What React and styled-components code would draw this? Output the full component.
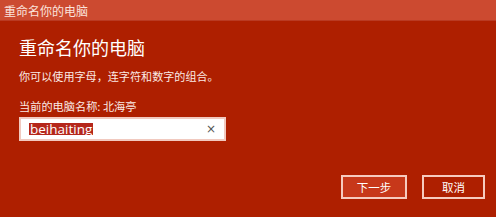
import React from "react"
import styled, { createGlobalStyle } from "styled-components"

const GlobalStyle = createGlobalStyle`
  html, body {
    margin: 0;
    padding: 0;
  }
  body {
    font-family: "Noto Sans CJK SC", "Noto Sans", sans-serif;
  }
`

const Window = styled.div`
  width: 496px;
  height: 217px;
  background: #ae1f00;
  display: flex;
  flex-direction: column;
  overflow: hidden;
`

const TitleBar = styled.div`
  height: 21px;
  background: #cc4a30;
  border-bottom: 1px solid #b93a22;
  box-sizing: border-box;
  display: flex;
  align-items: center;
  padding-left: 4px;
  color: #fbe3dc;
  font-size: 12px;
`

const Content = styled.div`
  padding: 14px 11px 0 19px;
  display: flex;
  flex-direction: column;
`

const Heading = styled.h1`
  margin: 0;
  font-size: 18px;
  line-height: 24px;
  font-weight: 400;
  color: #ffffff;
`

const Hint = styled.p`
  margin: 9px 0 0;
  font-size: 11.1px;
  line-height: 16px;
  color: #fbeae5;
`

const Label = styled.div`
  margin-top: 15px;
  font-size: 11.2px;
  line-height: 14px;
  color: #fbeae5;
`

const InputBox = styled.div`
  margin-top: 4px;
  width: 207px;
  height: 24px;
  box-sizing: border-box;
  border: 2px solid #f1c9bf;
  background: #ffffff;
  display: flex;
  align-items: center;
  padding: 0 8px 0 8px;
`

const Selected = styled.span`
  background: #b5271b;
  color: #ffffff;
  font-family: "Open Sans", "Noto Sans", sans-serif;
  font-size: 13.5px;
  line-height: 12px;
  padding: 0 1px;
  flex: none;
`

const Clear = styled.span`
  margin-left: auto;
  color: #555;
  font-size: 12px;
  line-height: 12px;
  font-family: "DejaVu Sans", sans-serif;
`

const Actions = styled.div`
  margin-top: 34px;
  display: flex;
  justify-content: flex-end;
  gap: 15px;
`

const Button = styled.button`
  width: ${(p) => p.$w}px;
  height: 24px;
  box-sizing: border-box;
  border: 2px solid #f6cbbf;
  background: ${(p) => (p.$primary ? "#c7381a" : "#ae1f00")};
  color: #ffffff;
  font-family: "Noto Sans CJK SC", sans-serif;
  font-size: 11.5px;
  padding: 0;
  display: flex;
  align-items: center;
  justify-content: center;
`

export default function App() {
  return (
    <>
      <GlobalStyle />
      <Window>
        <TitleBar>重命名你的电脑</TitleBar>
        <Content>
          <Heading>重命名你的电脑</Heading>
          <Hint>你可以使用字母，连字符和数字的组合。</Hint>
          <Label>当前的电脑名称: 北海亭</Label>
          <InputBox>
            <Selected>beihaiting</Selected>
            <Clear>×</Clear>
          </InputBox>
          <Actions>
            <Button $primary $w={66}>下一步</Button>
            <Button $w={63}>取消</Button>
          </Actions>
        </Content>
      </Window>
    </>
  )
}
